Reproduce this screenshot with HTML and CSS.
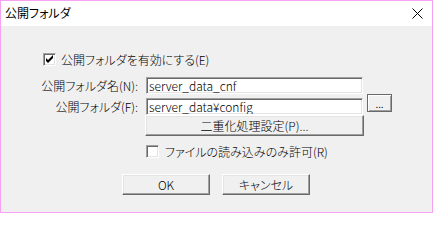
FILE: index.html
```html
<!DOCTYPE html>
<html lang="ja">
<head>
<meta charset="utf-8">
<title>公開フォルダ</title>
<link rel="stylesheet" href="styles.css">
</head>
<body>
<div class="window">
  <div class="titlebar">
    <span class="title">公開フォルダ</span>
    <svg class="close" width="11" height="11" viewBox="0 0 11 11"><path d="M0.5 0.5 L10.5 10.5 M10.5 0.5 L0.5 10.5" stroke="#000" stroke-width="1" fill="none"/></svg>
  </div>
  <div class="content">
    <label class="check-row top-check">
      <span class="checkbox"><svg width="11" height="11" viewBox="0 0 11 11"><path d="M2 4 L2 7 L4 9 L9 4 L9 1 L4 6 Z" fill="#000"/></svg></span>
      <span class="check-text">公開フォルダを有効にする(E)</span>
    </label>
    <div class="form">
      <span class="label r1">公開フォルダ名(N):</span>
      <div class="field r1">server_data_cnf</div>
      <span class="label r2">公開フォルダ(F):</span>
      <div class="field r2">server_data¥config</div>
      <button class="btn browse r2">...</button>
      <button class="btn wide r3">二重化処理設定(P)...</button>
      <label class="check-row r4">
        <span class="checkbox"></span>
        <span class="check-text">ファイルの読み込みのみ許可(R)</span>
      </label>
    </div>
    <div class="actions">
      <button class="btn action">OK</button>
      <button class="btn action">キャンセル</button>
    </div>
  </div>
</div>
</body>
</html>
```
FILE: styles.css
```css
* { box-sizing: border-box; }
html, body { margin: 0; padding: 0; }
body {
  font-family: "Noto Sans CJK JP", "Noto Sans", sans-serif;
  font-size: 12px;
  font-weight: 300;
  color: #000;
  font-feature-settings: "palt";
}
.window {
  width: 433px;
  height: 213px;
  border: 1px solid #f5a3f1;
  background: #f0f0f0;
  overflow: hidden;
}
.titlebar {
  height: 25px;
  background: #fff;
  display: flex;
  align-items: center;
  justify-content: space-between;
  padding: 0 9px 0 4px;
}
.title { font-size: 12px; font-weight: 400; line-height: 14px; margin-top: -1px; }
.close { display: block; margin-top: -1px; }
.content { padding-top: 27px; }
.check-row {
  display: flex;
  align-items: center;
  height: 13px;
  line-height: 13px;
}
.top-check { padding-left: 42px; }
.checkbox {
  width: 13px;
  height: 13px;
  flex: none;
  background: #fff;
  border: 1px solid;
  border-color: #a0a0a0 #fff #fff #a0a0a0;
  box-shadow: inset 1px 1px #696969, inset -1px -1px #e3e3e3;
  display: flex;
  align-items: center;
  justify-content: center;
}
.checkbox svg { display: block; }
.check-text { margin-left: 5px; white-space: nowrap; }
.form {
  margin-top: 11px;
  display: grid;
  grid-template-columns: 145px 217px 29px;
  align-items: start;
}
.label {
  grid-column: 1;
  text-align: right;
  padding-right: 8px;
  white-space: nowrap;
  line-height: 17px;
}
.r1 { grid-row: 1; }
.r2 { grid-row: 2; margin-top: 4px; }
.r3 { grid-row: 3; margin-top: 1px; }
.r4 { grid-row: 4; margin-top: 9px; }
.field {
  grid-column: 2;
  height: 17px;
  background: #fff;
  border: 1px solid;
  border-color: #a0a0a0 #fff #fff #a0a0a0;
  box-shadow: inset 1px 1px #696969, inset -1px -1px #e3e3e3;
  padding-left: 2px;
  line-height: 15px;
  white-space: nowrap;
  overflow: hidden;
}
.btn {
  font: inherit;
  color: #000;
  background: #f0f0f0;
  border: 1px solid;
  border-color: #fff #696969 #696969 #fff;
  box-shadow: inset -1px -1px #a0a0a0, inset 1px 1px #e3e3e3;
  padding: 0;
  margin: 0;
  line-height: 17px;
}
.browse {
  grid-column: 3;
  width: 25px;
  height: 18px;
  margin-left: 4px;
  border-color: #696969;
  box-shadow: inset 1px 1px #fff, inset -1px -1px #a0a0a0;
  line-height: 12px;
  font-size: 11px;
}
.wide {
  grid-column: 2;
  height: 21px;
  width: 219px;
  margin-left: -1px;
}
.r4.check-row { grid-column: 2 / 4; }
.r4 .check-text { margin-left: 6px; }
.actions {
  display: flex;
  justify-content: center;
  gap: 12px;
  margin-top: 16px;
  padding-right: 1px;
}
.action { width: 88px; height: 21px; }
```
